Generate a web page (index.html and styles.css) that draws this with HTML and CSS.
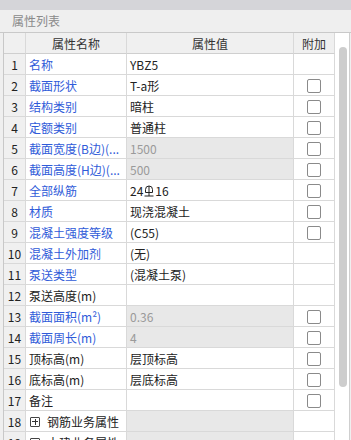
FILE: index.html
```html
<!DOCTYPE html>
<html lang="zh">
<head>
<meta charset="utf-8">
<title>属性列表</title>
<link rel="stylesheet" href="styles.css">
</head>
<body>
<div class="topbar"></div>
<div class="title">属性列表</div>
<div class="panel">
  <div class="grid">
    <div class="cell head"></div><div class="cell head">属性名称</div><div class="cell head">属性值</div><div class="cell head">附加</div>

    <div class="cell num">1</div><div class="cell name blue">名称</div><div class="cell val">YBZ5</div><div class="cell add"></div>
    <div class="cell num">2</div><div class="cell name blue">截面形状</div><div class="cell val">T-a形</div><div class="cell add"><span class="cb"></span></div>
    <div class="cell num">3</div><div class="cell name blue">结构类别</div><div class="cell val">暗柱</div><div class="cell add"><span class="cb"></span></div>
    <div class="cell num">4</div><div class="cell name blue">定额类别</div><div class="cell val">普通柱</div><div class="cell add"><span class="cb"></span></div>
    <div class="cell num">5</div><div class="cell name blue">截面宽度(B边)(...</div><div class="cell val dis">1500</div><div class="cell add"><span class="cb"></span></div>
    <div class="cell num">6</div><div class="cell name blue">截面高度(H边)(...</div><div class="cell val dis">500</div><div class="cell add"><span class="cb"></span></div>
    <div class="cell num">7</div><div class="cell name blue">全部纵筋</div><div class="cell val">24<svg class="steel" viewBox="0 0 10 12" width="10" height="12"><path d="M1.5 7.5V4.5a3.5 3.5 0 0 1 7 0v3z M5 1v10 M0.5 11h9" fill="none" stroke="#222" stroke-width="1"/></svg>16</div><div class="cell add"><span class="cb"></span></div>
    <div class="cell num">8</div><div class="cell name blue">材质</div><div class="cell val">现浇混凝土</div><div class="cell add"><span class="cb"></span></div>
    <div class="cell num">9</div><div class="cell name blue">混凝土强度等级</div><div class="cell val">(C55)</div><div class="cell add"><span class="cb"></span></div>
    <div class="cell num">10</div><div class="cell name blue">混凝土外加剂</div><div class="cell val">(无)</div><div class="cell add"></div>
    <div class="cell num">11</div><div class="cell name blue">泵送类型</div><div class="cell val">(混凝土泵)</div><div class="cell add"></div>
    <div class="cell num">12</div><div class="cell name">泵送高度(m)</div><div class="cell val"></div><div class="cell add"></div>
    <div class="cell num">13</div><div class="cell name blue">截面面积(m²)</div><div class="cell val dis">0.36</div><div class="cell add"><span class="cb"></span></div>
    <div class="cell num">14</div><div class="cell name blue">截面周长(m)</div><div class="cell val dis">4</div><div class="cell add"><span class="cb"></span></div>
    <div class="cell num">15</div><div class="cell name">顶标高(m)</div><div class="cell val">层顶标高</div><div class="cell add"><span class="cb"></span></div>
    <div class="cell num">16</div><div class="cell name">底标高(m)</div><div class="cell val">层底标高</div><div class="cell add"><span class="cb"></span></div>
    <div class="cell num">17</div><div class="cell name">备注</div><div class="cell val"></div><div class="cell add"><span class="cb"></span></div>
    <div class="cell num">18</div><div class="cell name"><span class="plus"></span>钢筋业务属性</div><div class="cell val dis"></div><div class="cell add"></div>
    <div class="cell num">19</div><div class="cell name"><span class="plus"></span>土建业务属性</div><div class="cell val dis"></div><div class="cell add"></div>
  </div>
  <div class="scroll"><div class="thumb"></div></div>
</div>
</body>
</html>
```
FILE: styles.css
```css
* { box-sizing: border-box; margin: 0; padding: 0; }
html, body { width: 351px; height: 440px; overflow: hidden; }
body {
  background: #efefef;
  font-family: "Noto Sans CJK SC", "Microsoft YaHei", sans-serif;
  font-size: 12px;
  color: #222;
}
.topbar { height: 10px; background: #d5d5d9; }
.title {
  height: 23px;
  line-height: 22px;
  padding-left: 12px;
  color: #8a8a8a;
  background: #efefef;
  border-bottom: 1px solid #c9c9c9;
}
.panel { display: flex; padding-left: 3px; height: 407px; }
.grid {
  display: grid;
  grid-template-columns: 22px 101px 167px 41px;
  grid-auto-rows: 21px;
  border-left: 1px solid #c8c8c8;
  align-content: start;
}
.cell {
  display: flex;
  align-items: center;
  white-space: nowrap;
  overflow: hidden;
  background: #fff;
  border-right: 1px solid #d9d9d9;
  border-bottom: 1px solid #d9d9d9;
  padding-top: 1px;
}
.head {
  background: #f0f0f0;
  justify-content: center;
  color: #333;
  border-bottom-color: #cfcfcf;
}
.num { background: #f0f0f0; justify-content: center; color: #222; }
.name, .val { padding-left: 3px; }
.blue { color: #2f5bd9; }
.dis { background: #e8e8e8; color: #9a9a9a; }
.add { justify-content: center; }
.cb {
  width: 14px;
  height: 14px;
  border: 1px solid #8a8a8a;
  border-radius: 2px;
  background: #fff;
}
.steel { margin: 0 1px; }
.plus {
  position: relative;
  width: 10px;
  height: 10px;
  border: 1px solid #444;
  border-radius: 1px;
  margin: 0 7px 0 1px;
}
.plus::before, .plus::after {
  content: "";
  position: absolute;
  background: #333;
}
.plus::before { left: 1px; right: 1px; top: 3.5px; height: 1px; }
.plus::after { top: 1px; bottom: 1px; left: 3.5px; width: 1px; }
.scroll {
  width: 15px;
  background: #fff;
  border-right: 1px solid #cfcfcf;
}
.thumb {
  width: 8px;
  height: 340px;
  margin: 14px 0 0 4px;
  background: #cdcdcd;
  border-radius: 4px;
}
```
